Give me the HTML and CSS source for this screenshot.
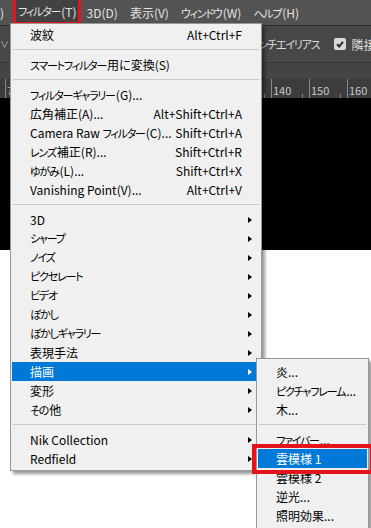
FILE: index.html
```html
<!DOCTYPE html>
<html lang="ja">
<head>
    <meta charset="UTF-8">
    <title>フィルター 描画</title>
    <link rel="stylesheet" href="styles.css">
</head>
<body>
    <div class="app">
        <div class="menubar">
            <span class="mb-item cut">)</span>
            <span class="mb-item active"><span class="k">フィルター</span>(T)</span>
            <span class="mb-item">3D(D)</span>
            <span class="mb-item">表示(V)</span>
            <span class="mb-item"><span class="k">ウィンドウ</span>(W)</span>
            <span class="mb-item"><span class="k">ヘルプ</span>(H)</span>
        </div>
        <div class="options">
            <span class="chevron">∨</span>
            <span class="opt-text k">アンチエイリアス</span>
            <span class="checkbox">
                <svg width="12" height="12" viewBox="0 0 12 12"><polyline points="3,6.2 5.2,8.4 9,3.8" fill="none" stroke="#2a2a2a" stroke-width="2"/></svg>
            </span>
            <span class="opt-text">隣接</span>
        </div>
        <div class="tabs"></div>
        <div class="ruler">
            <span class="tick">70</span>
            <span class="tick">80</span>
            <span class="tick">90</span>
            <span class="tick">100</span>
            <span class="tick">110</span>
            <span class="tick">120</span>
            <span class="tick">130</span>
            <span class="tick">140</span>
            <span class="tick">150</span>
            <span class="tick">160</span>
        </div>
        <div class="canvas"></div>
        <div class="paper"></div>

        <div class="menu main-menu">
            <div class="row"><span>波紋</span><span class="key">Alt+Ctrl+F</span></div>
            <div class="sep"></div>
            <div class="row"><span><span class="k">スマートフィルター</span>用に変換(S)</span></div>
            <div class="sep"></div>
            <div class="row"><span><span class="k">フィルターギャラリー</span>(G)...</span></div>
            <div class="row"><span>広角補正(A)...</span><span class="key">Alt+Shift+Ctrl+A</span></div>
            <div class="row"><span>Camera Raw <span class="k">フィルター</span>(C)...</span><span class="key">Shift+Ctrl+A</span></div>
            <div class="row"><span><span class="k">レンズ</span>補正(R)...</span><span class="key">Shift+Ctrl+R</span></div>
            <div class="row"><span><span class="k">ゆがみ</span>(L)...</span><span class="key">Shift+Ctrl+X</span></div>
            <div class="row"><span>Vanishing Point(V)...</span><span class="key">Alt+Ctrl+V</span></div>
            <div class="sep"></div>
            <div class="row"><span>3D</span><i class="arrow"></i></div>
            <div class="row"><span class="k">シャープ</span><i class="arrow"></i></div>
            <div class="row"><span class="k">ノイズ</span><i class="arrow"></i></div>
            <div class="row"><span class="k">ピクセレート</span><i class="arrow"></i></div>
            <div class="row"><span class="k">ビデオ</span><i class="arrow"></i></div>
            <div class="row"><span class="k">ぼかし</span><i class="arrow"></i></div>
            <div class="row"><span class="k">ぼかしギャラリー</span><i class="arrow"></i></div>
            <div class="row"><span>表現手法</span><i class="arrow"></i></div>
            <div class="row selected"><span>描画</span><i class="arrow"></i></div>
            <div class="row"><span>変形</span><i class="arrow"></i></div>
            <div class="row"><span><span class="k">その</span>他</span><i class="arrow"></i></div>
            <div class="sep"></div>
            <div class="row"><span>Nik Collection</span><i class="arrow"></i></div>
            <div class="row"><span>Redfield</span><i class="arrow"></i></div>
        </div>

        <div class="menu sub-menu">
            <div class="row"><span>炎...</span></div>
            <div class="row"><span><span class="k">ピクチャフレーム</span>...</span></div>
            <div class="row"><span>木...</span></div>
            <div class="sep"></div>
            <div class="row"><span><span class="k">ファイバー</span>...</span></div>
            <div class="row selected"><span>雲模様 1</span></div>
            <div class="row"><span>雲模様 2</span></div>
            <div class="row"><span>逆光...</span></div>
            <div class="row"><span>照明効果...</span></div>
        </div>

        <div class="mark"></div>
    </div>
</body>
</html>
```

FILE: styles.css
```css
body {
    margin: 0;
    padding: 0;
    font-family: "Noto Sans CJK JP", "Noto Sans", sans-serif;
    font-size: 12px;
    font-feature-settings: "palt";
    background-color: #fff;
}

/* kana runs: the UI font sets them narrower than kanji */
.k {
    font-size: 11px;
    letter-spacing: -1.2px;
    padding-right: 1px;
}

.app {
    position: relative;
    width: 371px;
    height: 528px;
    overflow: hidden;
    display: flex;
    flex-direction: column;
}

.menubar {
    height: 25px;
    flex: none;
    display: flex;
    align-items: stretch;
    background-color: #535353;
    border-bottom: 1px solid #2e2e2e;
    color: #e4e4e4;
    white-space: nowrap;
}

.mb-item {
    display: flex;
    align-items: center;
    padding: 0 6px;
}

.mb-item.cut {
    padding: 0 4px 0 0;
}

.mb-item.active {
    margin-left: 5px;
    padding: 0 1px 0 2px;
    background-color: #424242;
    border: 3px solid #e3141c;
    border-top-width: 0;
}

.options {
    height: 36px;
    flex: none;
    display: flex;
    align-items: center;
    background-color: #474747;
    border-bottom: 1px solid #383838;
    color: #dcdcdc;
    white-space: nowrap;
}

.chevron {
    width: 10px;
    margin-right: 241px;
    font-size: 9px;
    color: #bdbdbd;
}

.checkbox {
    width: 12px;
    height: 12px;
    margin: 0 5px 0 14px;
    background-color: #d8d8d8;
    border-radius: 2px;
    display: flex;
}

.tabs {
    height: 16px;
    flex: none;
    background-color: #444;
}

.ruler {
    height: 19px;
    flex: none;
    display: flex;
    background-color: #3c3c3c;
    color: #c6c6c6;
    font-size: 11px;
    padding-left: 5px;
}

.tick {
    position: relative;
    flex: none;
    width: 38px;
    box-sizing: border-box;
    border-left: 1px solid #8a8a8a;
    padding-left: 1px;
    line-height: 22px;
}

.tick::after {
    content: "";
    position: absolute;
    left: 30px;
    bottom: 0;
    width: 1px;
    height: 4px;
    background-color: #8a8a8a;
}

.canvas {
    height: 152px;
    flex: none;
    background-color: #000;
}

.paper {
    flex: 1;
    background-color: #fff;
}

/* dropdown menus lie over the workspace */
.menu {
    position: absolute;
    box-sizing: border-box;
    background-color: #f0f0f0;
    border: 1px solid #979797;
    box-shadow: 3px 3px 3px rgba(0, 0, 0, 0.4);
    color: #000;
    white-space: nowrap;
}

.main-menu {
    left: 10px;
    top: 23px;
    width: 252px;
    padding: 1px 1px 2px;
}

.sub-menu {
    left: 256px;
    top: 358px;
    width: 113px;
    padding: 3px 1px;
}

.row {
    height: 19px;
    line-height: 19px;
    display: flex;
    align-items: center;
    padding: 0 18px;
}

.key {
    margin-left: auto;
}

.arrow {
    margin-left: auto;
    margin-right: -10px;
    width: 0;
    height: 0;
    border-style: solid;
    border-width: 3.5px 0 3.5px 4px;
    border-color: transparent transparent transparent #000;
}

.row.selected {
    background-color: #0078d7;
    color: #fff;
}

.row.selected .arrow {
    border-left-color: #fff;
}

.sep {
    height: 11px;
    display: flex;
    align-items: center;
    padding: 0 1px;
}

.sep::before {
    content: "";
    flex: 1;
    height: 1px;
    background-color: #c9c9c9;
}

.mark {
    position: absolute;
    left: 252px;
    top: 444px;
    width: 122px;
    height: 30px;
    box-sizing: border-box;
    border: 4px solid #e3141c;
}
```
